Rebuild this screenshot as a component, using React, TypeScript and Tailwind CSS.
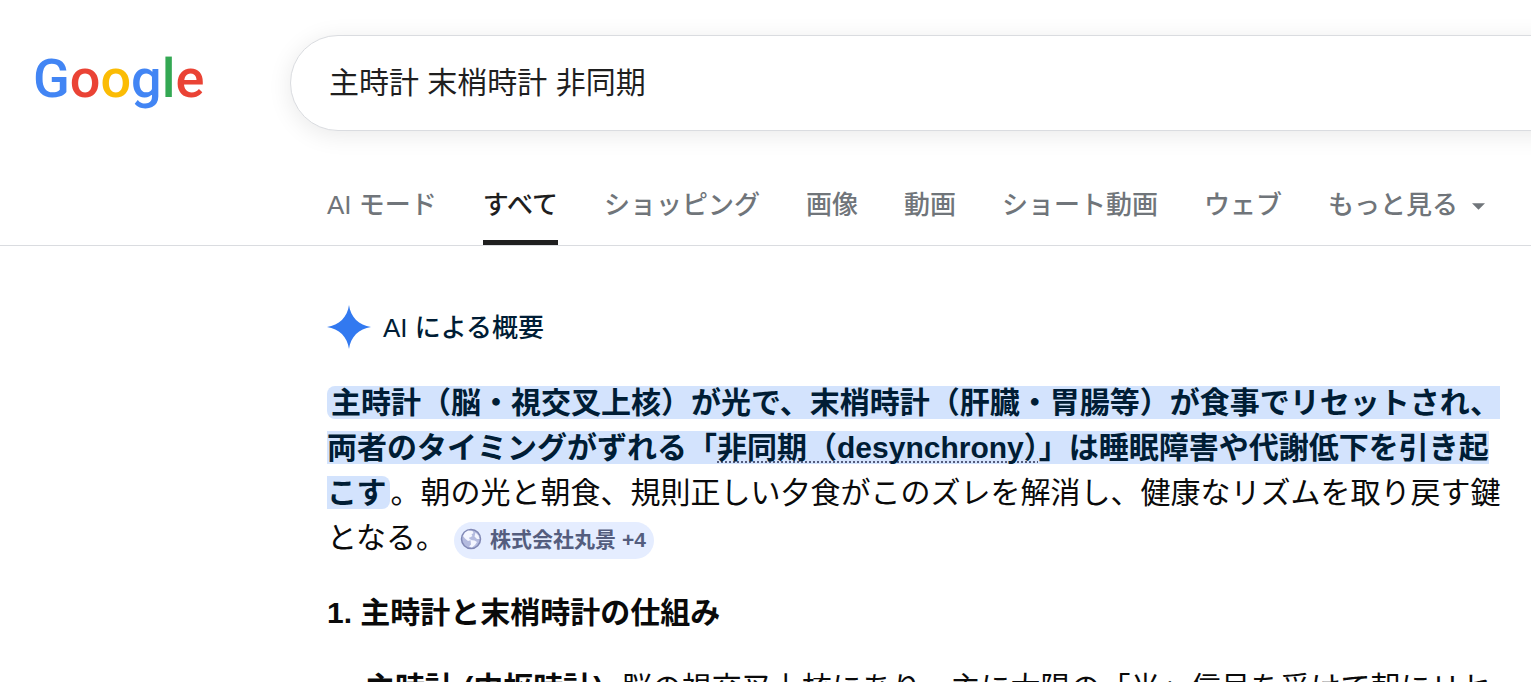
import { FormEvent, useState } from 'react';

type Tab = {
  label: string;
  active?: boolean;
};

const tabs: Tab[] = [
  { label: 'AI モード' },
  { label: 'すべて', active: true },
  { label: 'ショッピング' },
  { label: '画像' },
  { label: '動画' },
  { label: 'ショート動画' },
  { label: 'ウェブ' },
];

function Logo() {
  return (
    <a
      href="#"
      aria-label="Google"
      className="w-[256px] shrink-0 pl-[33px] font-['Roboto',sans-serif] text-[54px] leading-[88px] font-medium text-[#4285f4]"
    >
      G<span className="text-[#ea4335]">o</span>
      <span className="text-[#fbbc05]">o</span>g<span className="text-[#34a853]">l</span>
      <span className="text-[#ea4335]">e</span>
    </a>
  );
}

/** Search box that runs past the right edge of the window. */
function SearchBar() {
  const [query, setQuery] = useState('主時計 末梢時計 非同期');
  const handleSubmit = (e: FormEvent) => e.preventDefault();

  return (
    <form
      role="search"
      onSubmit={handleSubmit}
      className="ml-[34px] -mr-16 flex h-24 flex-1 rounded-full border border-[#dadce0] bg-white pb-0.5 pl-[38px] shadow-[0_4px_24px_rgba(0,0,0,0.09)]"
    >
      <input
        type="text"
        aria-label="検索"
        value={query}
        onChange={(e) => setQuery(e.target.value)}
        className="min-w-0 flex-1 bg-transparent text-[30px] text-[#1f1f1f] outline-none"
      />
    </form>
  );
}

function TabBar() {
  return (
    <nav className="flex gap-[46px] border-b border-[#dadce0] pl-[327px] text-[26px] leading-[38px] font-medium whitespace-nowrap text-[#70757a]">
      {tabs.map((tab) => (
        <a
          key={tab.label}
          href="#"
          className={
            tab.active
              ? 'border-b-5 border-[#1f1f1f] pb-4 text-[#1f1f1f]'
              : 'border-b-5 border-transparent pb-4'
          }
        >
          {tab.label}
        </a>
      ))}
      <button type="button" className="flex items-center gap-[14px] border-b-5 border-transparent pb-4">
        もっと見る
        <svg className="mt-0.5 h-[7px] w-[13px]" viewBox="0 0 14 7" fill="currentColor" aria-hidden="true">
          <path d="M0 0h14L7 7z" />
        </svg>
      </button>
    </nav>
  );
}

function Sparkle() {
  return (
    <svg className="size-11" viewBox="0 0 44 44" fill="#3279f0" aria-hidden="true">
      <path d="M22 0C23.500 12 32 20.500 44 22C32 23.500 23.500 32 22 44C20.500 32 12 23.500 0 22C12 20.500 20.500 12 22 0Z" />
    </svg>
  );
}

function Globe() {
  return (
    <svg className="size-[22px]" viewBox="0 0 22 22" aria-hidden="true">
      <circle cx="11" cy="11" r="9.500" fill="#b4bbdf" stroke="#8188b5" strokeWidth="1.500" />
      <path
        d="M3 8 5 4.500 8 2.500 12.500 3 13.500 5 11.500 6.500 12.500 8 10 9.500 9 9.500 9.500 11 11.500 12 8 13 5 10.500Z"
        fill="#f4f6ff"
      />
      <path d="M10.500 12 14.500 12.500 17 14 15 17 12 19.500 9 18.500 11 16.500Z" fill="#f4f6ff" />
      <path d="M15.500 4.500 18.500 7.500 19.500 11 17 11 14.500 8.500Z" fill="#f4f6ff" />
    </svg>
  );
}

function AiOverview() {
  return (
    <main className="pt-[57px] pr-7 pl-[327px] text-[30px] leading-[45px] text-[#0a0a0a]">
      <div className="flex items-center gap-3 text-[26px] font-medium text-[#001d35]">
        <Sparkle />
        <h1 className="pt-[3px]">AI による概要</h1>
      </div>

      <p className="mt-[29px]">
        <mark className="rounded-lg bg-[#d3e3fd] px-1 font-bold text-[#001d35]">
          主時計（脳・視交叉上核）が光で、末梢時計（肝臓・胃腸等）が食事でリセットされ、両者のタイミングがずれる「
          <span className="underline decoration-[#545d7e] decoration-dotted decoration-2 underline-offset-3 [text-decoration-skip-ink:none]">
            非同期（desynchrony）
          </span>
          」は睡眠障害や代謝低下を引き起こす
        </mark>
        。朝の光と朝食、規則正しい夕食がこのズレを解消し、健康なリズムを取り戻す鍵となる。
        <button
          type="button"
          className="ml-2 inline-flex h-[37px] items-center gap-2 rounded-full bg-[#e5edff] pr-2 pb-0.5 pl-[6px] align-middle text-[21px] font-bold text-[#545d7e]"
        >
          <Globe />
          株式会社丸景 +4
        </button>
      </p>

      <h2 className="mt-[30px] font-bold">1. 主時計と末梢時計の仕組み</h2>

      <ul className="mt-[30px] list-disc pl-[38px]">
        <li>
          <strong>主時計 (中枢時計):</strong> 脳の視交叉上核にあり、主に太陽の「光」信号を受けて朝にリセットされる。
        </li>
      </ul>
    </main>
  );
}

export default function App() {
  return (
    <div
      lang="ja"
      className="h-screen overflow-hidden bg-white font-['Liberation_Sans','Noto_Sans_CJK_JP',sans-serif]"
    >
      <header>
        <div className="flex pt-[35px] pb-[55px]">
          <Logo />
          <SearchBar />
        </div>
        <TabBar />
      </header>
      <AiOverview />
    </div>
  );
}
